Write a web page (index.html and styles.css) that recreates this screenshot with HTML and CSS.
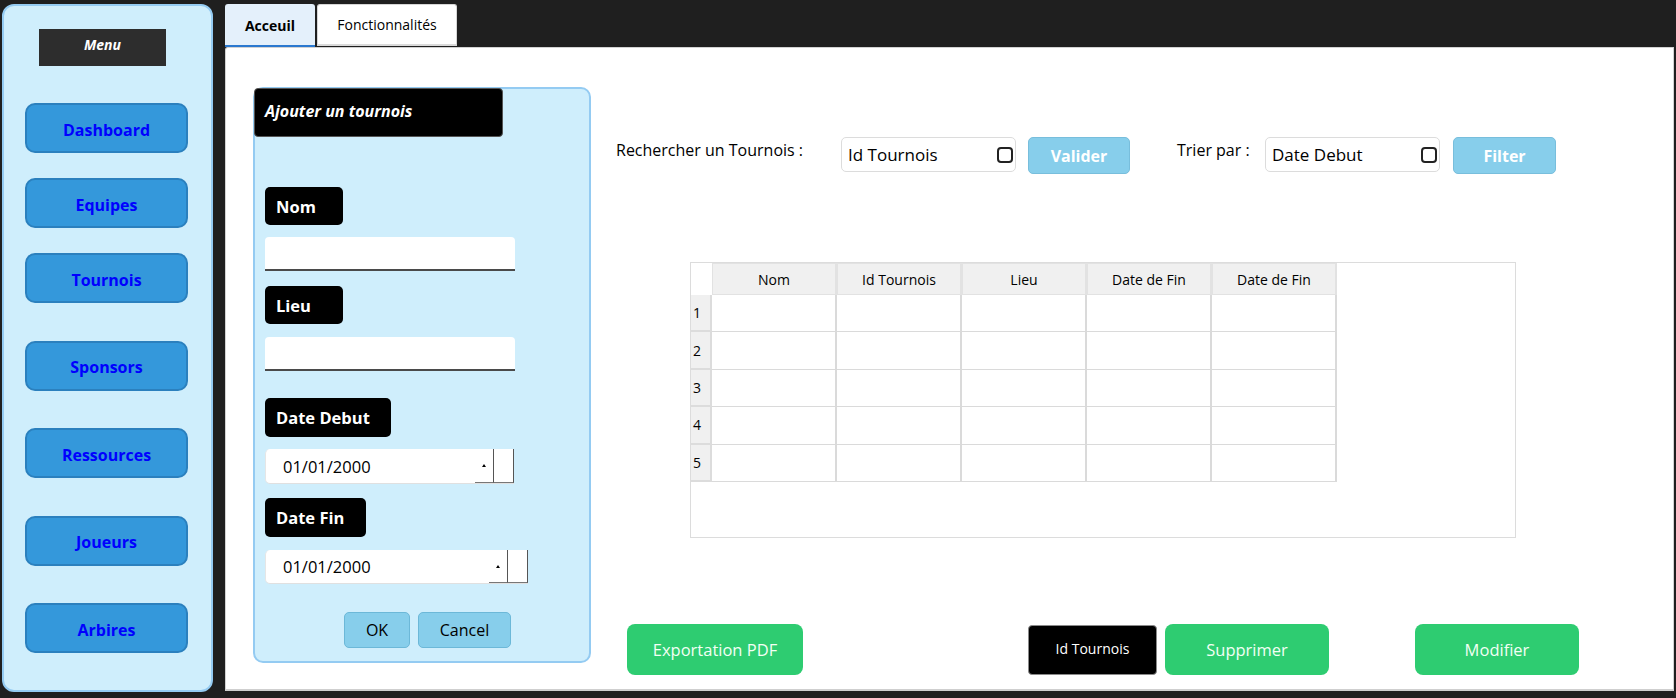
FILE: index.html
```html
<!DOCTYPE html>
<html lang="fr">
<head>
<meta charset="utf-8">
<title>Gestion des tournois</title>
<link rel="stylesheet" href="styles.css">
</head>
<body>
<div class="app">
  <aside class="sidebar">
    <div class="menu-title">Menu</div>
    <nav class="nav">
      <button class="nav-btn">Dashboard</button>
      <button class="nav-btn">Equipes</button>
      <button class="nav-btn">Tournois</button>
      <button class="nav-btn spaced">Sponsors</button>
      <button class="nav-btn spaced">Ressources</button>
      <button class="nav-btn spaced">Joueurs</button>
      <button class="nav-btn spaced">Arbires</button>
    </nav>
  </aside>
  <main class="main">
    <div class="tabs">
      <div class="tab tab-active">Acceuil</div>
      <div class="tab tab-second">Fonctionnalités</div>
    </div>
    <section class="content">
      <div class="form-panel">
        <div class="form-title">Ajouter un tournois</div>
        <div class="field-label label-nom">Nom</div>
        <div class="text-input"></div>
        <div class="field-label label-lieu">Lieu</div>
        <div class="text-input input-lieu"></div>
        <div class="field-label label-debut">Date Debut</div>
        <div class="date-input date-debut">
          <span class="date-value">01/01/2000</span>
          <span class="spin-up"><span class="tri"></span></span>
          <span class="spin-box"></span>
        </div>
        <div class="field-label label-fin">Date Fin</div>
        <div class="date-input date-fin">
          <span class="date-value">01/01/2000</span>
          <span class="spin-up"><span class="tri"></span></span>
          <span class="spin-box"></span>
        </div>
        <div class="form-actions">
          <button class="sky-btn ok-btn">OK</button>
          <button class="sky-btn cancel-btn">Cancel</button>
        </div>
      </div>
      <div class="right">
        <div class="toolbar">
          <div class="tool-label search-label">Rechercher un Tournois :</div>
          <div class="combo"><span class="combo-text">Id Tournois</span><span class="combo-check"></span></div>
          <button class="light-btn valider-btn">Valider</button>
          <div class="tool-label sort-label">Trier par :</div>
          <div class="combo"><span class="combo-text">Date Debut</span><span class="combo-check"></span></div>
          <button class="light-btn filter-btn">Filter</button>
        </div>
        <div class="grid-wrap">
          <div class="grid">
            <div class="corner"></div>
            <div class="col-head">Nom</div>
            <div class="col-head">Id Tournois</div>
            <div class="col-head">Lieu</div>
            <div class="col-head">Date de Fin</div>
            <div class="col-head">Date de Fin</div>

            <div class="row-head">1</div>
            <div class="cell"></div><div class="cell"></div><div class="cell"></div><div class="cell"></div><div class="cell"></div>
            <div class="row-head">2</div>
            <div class="cell"></div><div class="cell"></div><div class="cell"></div><div class="cell"></div><div class="cell"></div>
            <div class="row-head">3</div>
            <div class="cell"></div><div class="cell"></div><div class="cell"></div><div class="cell"></div><div class="cell"></div>
            <div class="row-head">4</div>
            <div class="cell"></div><div class="cell"></div><div class="cell"></div><div class="cell"></div><div class="cell"></div>
            <div class="row-head">5</div>
            <div class="cell"></div><div class="cell"></div><div class="cell"></div><div class="cell"></div><div class="cell"></div>
          </div>
        </div>
        <div class="actions">
          <button class="green-btn export-btn">Exportation PDF</button>
          <div class="id-box">Id Tournois</div>
          <button class="green-btn delete-btn">Supprimer</button>
          <button class="green-btn modify-btn">Modifier</button>
        </div>
      </div>
    </section>
  </main>
</div>
</body>
</html>
```

FILE: styles.css
```css
* { box-sizing: border-box; }

html, body {
  margin: 0;
  height: 100%;
}

body {
  background: #1f1f1f;
  font-family: "Open Sans", "Noto Sans", "DejaVu Sans", sans-serif;
  overflow: hidden;
  color: #000;
}

button {
  font-family: inherit;
  cursor: pointer;
}

.app {
  display: flex;
  align-items: flex-start;
  height: 698px;
  padding: 4px 2px 0 2px;
}

/* ---------- Sidebar ---------- */
.sidebar {
  width: 211px;
  height: 688px;
  flex-shrink: 0;
  background: #cfeefc;
  border: 2px solid #94cbf2;
  border-radius: 12px;
  padding-top: 23px;
  display: flex;
  flex-direction: column;
}

.menu-title {
  margin-left: 35px;
  width: 127px;
  height: 37px;
  background: #2d2d2d;
  color: #fff;
  font-weight: 700;
  font-style: italic;
  font-size: 14px;
  display: flex;
  align-items: center;
  justify-content: center;
  padding-bottom: 6px;
}

.nav {
  display: flex;
  flex-direction: column;
  margin-top: 37px;
  padding-left: 21px;
}

.nav-btn {
  width: 163px;
  height: 50px;
  background: #3498db;
  border: 2px solid #2b80be;
  border-radius: 10px;
  color: #0000ff;
  font-weight: 700;
  font-size: 16px;
  padding: 3px 0 0 0;
}

.nav-btn + .nav-btn { margin-top: 25px; }
.nav-btn.spaced { margin-top: 37.5px; }

/* ---------- Main ---------- */
.main {
  margin-left: 12px;
  width: 1449px;
  display: flex;
  flex-direction: column;
}

.tabs {
  display: flex;
  height: 43px;
  gap: 2px;
}

.tab {
  height: 43px;
  display: flex;
  align-items: center;
  justify-content: center;
  font-size: 14px;
  border-radius: 3px 3px 0 0;
}

.tab-active {
  width: 90px;
  background: #e4f0fb;
  font-weight: 700;
  border-bottom: 2px solid #2a78cf;
  padding-top: 2px;
}

.tab-second {
  width: 140px;
  background: #fff;
  border: 1px solid #d6d6d6;
  border-bottom: 2px solid #dadada;
  height: 42px;
}

.content {
  height: 644px;
  background: #fff;
  border: 1px solid #d2d2d2;
  border-bottom: 2px solid #cfcfcf;
  border-radius: 3px 0 0 0;
  display: flex;
  align-items: flex-start;
}

/* ---------- Form panel ---------- */
.form-panel {
  width: 338px;
  height: 576px;
  margin: 39px 0 0 27px;
  flex-shrink: 0;
  background: #cfeefc;
  border: 2px solid #94cbf2;
  border-radius: 10px;
  display: flex;
  flex-direction: column;
  padding-left: 10px;
}

.form-title {
  margin: -1px 0 0 -11px;
  width: 249px;
  height: 49px;
  background: #000;
  color: #fff;
  font-weight: 700;
  font-style: italic;
  font-size: 16px;
  border-radius: 4px;
  border: 1px solid #555;
  display: flex;
  align-items: center;
  padding: 0 0 4px 10px;
}

.field-label {
  height: 38px;
  background: #000;
  color: #fff;
  font-weight: 700;
  font-size: 16.5px;
  border-radius: 5px;
  display: flex;
  align-items: center;
  padding-left: 11px;
}

.label-nom { width: 78px; margin-top: 50px; }
.label-lieu { width: 78px; margin-top: 15px; }
.label-debut { width: 126px; margin-top: 27px; height: 39px; }
.label-fin { width: 101px; margin-top: 14px; height: 39px; }

.text-input {
  width: 250px;
  height: 34px;
  margin-top: 12px;
  background: #fff;
  border-bottom: 2px solid #4a4a4a;
  border-radius: 4px 4px 0 0;
}

.input-lieu { margin-top: 13px; }

.date-input {
  display: flex;
  height: 35px;
  background: #fff;
  border-radius: 5px 0 0 5px;
  border-bottom: 1px solid #e0e0e0;
  border-left: 1px solid #e6e6e6;
}

.date-debut { width: 249px; margin-top: 12px; }
.date-fin { width: 263px; margin-top: 13px; height: 34px; }

.date-value {
  flex: 1;
  display: flex;
  align-items: center;
  padding-left: 17px;
  font-size: 16.5px;
  color: #000;
}

.spin-up {
  width: 19px;
  height: 100%;
  border-right: 1px solid #555;
  border-bottom: 1px solid #777;
  display: flex;
  align-items: center;
  justify-content: center;
  background: #fff;
}

.tri {
  width: 0;
  height: 0;
  border-left: 2.5px solid transparent;
  border-right: 2.5px solid transparent;
  border-bottom: 3px solid #000;
}

.spin-box {
  width: 20px;
  height: 100%;
  border-right: 1px solid #555;
  border-bottom: 1px solid #777;
  background: #fff;
}

.form-actions {
  display: flex;
  gap: 8px;
  margin: 28px 0 0 79px;
}

.sky-btn {
  height: 36px;
  background: #87ceeb;
  border: 1px solid #6cb8d8;
  border-radius: 5px;
  font-size: 16px;
  color: #000;
  padding: 0;
}

.ok-btn { width: 66px; }
.cancel-btn { width: 93px; }

/* ---------- Right area ---------- */
.right {
  display: flex;
  flex-direction: column;
  padding-top: 89px;
}

.toolbar {
  display: flex;
  align-items: flex-start;
  height: 37px;
  margin-left: 25px;
}

.tool-label {
  font-size: 16px;
  padding-top: 2px;
  white-space: nowrap;
}

.search-label { width: 225px; }
.sort-label { width: 88px; margin-left: 47px; }

.combo {
  width: 175px;
  height: 35px;
  background: #fff;
  border: 1px solid #dcdcdc;
  border-radius: 5px;
  display: flex;
  align-items: center;
  padding: 0 2px 0 6px;
}

.combo-text {
  flex: 1;
  font-size: 17px;
  color: #000;
}

.combo-check {
  width: 16px;
  height: 16px;
  border: 2px solid #222;
  border-radius: 4px;
  margin-top: 1px;
}

.light-btn {
  height: 37px;
  background: #87ceeb;
  border: 1px solid #78bedc;
  border-radius: 5px;
  color: #fff;
  font-weight: 700;
  font-size: 16px;
  padding: 0;
}

.valider-btn { width: 102px; margin-left: 12px; }
.filter-btn { width: 103px; margin-left: 13px; }

/* ---------- Grid ---------- */
.grid-wrap {
  margin: 88px 0 0 99px;
  width: 826px;
  height: 276px;
  border: 1px solid #dcdcdc;
  background: #fff;
}

.grid {
  display: grid;
  grid-template-columns: 21px repeat(5, 125px);
  grid-template-rows: 32px repeat(5, 37.4px);
}

.corner { background: #fff; }

.col-head {
  background: #f0f0f0;
  border: 1px solid #e2e2e2;
  border-right: 2px solid #e2e2e2;
  display: flex;
  align-items: center;
  justify-content: center;
  font-size: 14px;
  color: #000;
}

.row-head {
  background: #f0f0f0;
  border-right: 2px solid #dcdcdc;
  border-bottom: 2px solid #dcdcdc;
  display: flex;
  align-items: center;
  padding-left: 2px;
  font-size: 14px;
}

.cell {
  border-right: 2px solid #dadada;
  border-bottom: 1px solid #dadada;
}

/* ---------- Actions ---------- */
.actions {
  display: flex;
  align-items: flex-start;
  margin: 86px 0 0 36px;
}

.green-btn {
  height: 51px;
  background: #2ecc71;
  border: none;
  border-radius: 8px;
  color: #f2fff4;
  font-size: 16.5px;
  padding: 0;
}

.export-btn { width: 176px; }
.delete-btn { width: 164px; margin-left: 8px; }
.modify-btn { width: 164px; margin-left: 86px; }

.id-box {
  width: 129px;
  height: 50px;
  margin: 1px 0 0 225px;
  background: #000;
  color: #fff;
  border: 1px solid #8a8a8a;
  border-radius: 4px;
  font-size: 14px;
  display: flex;
  align-items: center;
  justify-content: center;
  padding-bottom: 4px;
}
```
